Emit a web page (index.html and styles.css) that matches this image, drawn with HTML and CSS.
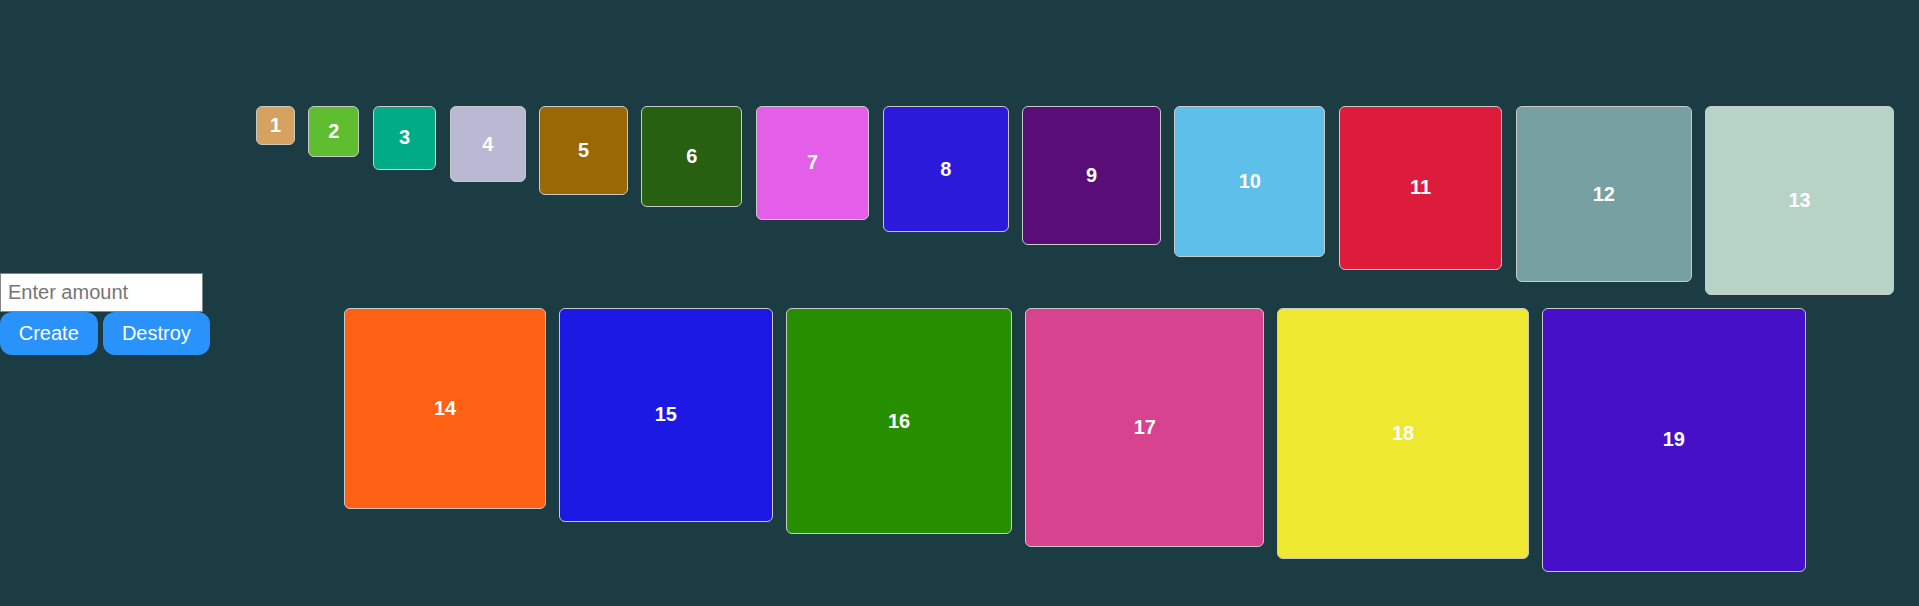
FILE: index.html
```html
<!DOCTYPE html>
<html lang="en">
<head>
<meta charset="utf-8">
<title>Create boxes</title>
<link rel="stylesheet" href="styles.css">
</head>
<body>
<main class="page">
  <div class="controls">
    <input class="amount" type="number" placeholder="Enter amount">
    <div class="buttons">
      <button class="btn" type="button">Create</button>
      <button class="btn" type="button">Destroy</button>
    </div>
  </div>
  <div class="boxes">
    <div class="box" style="width:38.75px;height:38.75px;background:#d6a25f">1</div>
    <div class="box" style="width:51.25px;height:51.25px;background:#5fbd30">2</div>
    <div class="box" style="width:63.75px;height:63.75px;background:#02ab87">3</div>
    <div class="box" style="width:76.25px;height:76.25px;background:#b9b9d3">4</div>
    <div class="box" style="width:88.75px;height:88.75px;background:#9a6804">5</div>
    <div class="box" style="width:101.25px;height:101.25px;background:#266010">6</div>
    <div class="box" style="width:113.75px;height:113.75px;background:#e45ee9">7</div>
    <div class="box" style="width:126.25px;height:126.25px;background:#2c1adb">8</div>
    <div class="box" style="width:138.75px;height:138.75px;background:#590e77">9</div>
    <div class="box" style="width:151.25px;height:151.25px;background:#5ebfea">10</div>
    <div class="box" style="width:163.75px;height:163.75px;background:#dc1c3a">11</div>
    <div class="box" style="width:176.25px;height:176.25px;background:#77a0a2">12</div>
    <div class="box" style="width:188.75px;height:188.75px;background:#b6d3c5">13</div>
    <div class="box" style="width:201.25px;height:201.25px;background:#ff6114">14</div>
    <div class="box" style="width:213.75px;height:213.75px;background:#1c19e5">15</div>
    <div class="box" style="width:226.25px;height:226.25px;background:#258f00">16</div>
    <div class="box" style="width:238.75px;height:238.75px;background:#d84390">17</div>
    <div class="box" style="width:251.25px;height:251.25px;background:#eee830">18</div>
    <div class="box" style="width:263.75px;height:263.75px;background:#4510c8">19</div>
  </div>
</main>
</body>
</html>
```

FILE: styles.css
```css
* {
  box-sizing: border-box;
}

html,
body {
  margin: 0;
  padding: 0;
  background: #1b3c42;
  font-family: "Liberation Sans", Arial, sans-serif;
}

.page {
  display: flex;
  align-items: flex-start;
  height: 606px;
  padding-top: 106px;
  overflow: hidden;
}

.controls {
  display: flex;
  flex-direction: column;
  align-items: flex-start;
  margin-top: 167.3px;
  width: 210px;
  flex-shrink: 0;
}

.amount {
  display: block;
  width: 203.3px;
  height: 38.5px;
  margin: 0;
  padding: 0 7px;
  border: 1.25px solid #858585;
  border-radius: 0;
  background: #ffffff;
  font-family: "Liberation Sans", Arial, sans-serif;
  font-size: 20px;
  color: #222222;
  outline: none;
  -moz-appearance: textfield;
}

.amount::-webkit-outer-spin-button,
.amount::-webkit-inner-spin-button {
  -webkit-appearance: none;
  margin: 0;
}

.amount::placeholder {
  color: #757575;
}

.buttons {
  display: flex;
  gap: 5.6px;
  margin-top: 0.6px;
}

.btn {
  height: 42.5px;
  padding: 0 18.75px;
  margin: 0;
  border: none;
  border-radius: 12px;
  background: #2a92fb;
  color: #ffffff;
  font-family: "Liberation Sans", Arial, sans-serif;
  font-size: 20px;
  cursor: pointer;
}

.boxes {
  flex: 1;
  display: flex;
  flex-wrap: wrap;
  justify-content: center;
  align-items: flex-start;
  align-content: flex-start;
  column-gap: 13.25px;
  row-gap: 13.3px;
  margin-left: 21px;
}

.box {
  display: flex;
  align-items: center;
  justify-content: center;
  flex-shrink: 0;
  border: 1.25px solid #c9c9c9;
  border-radius: 6px;
  color: #ffffff;
  font-weight: bold;
  font-size: 20px;
}
```
